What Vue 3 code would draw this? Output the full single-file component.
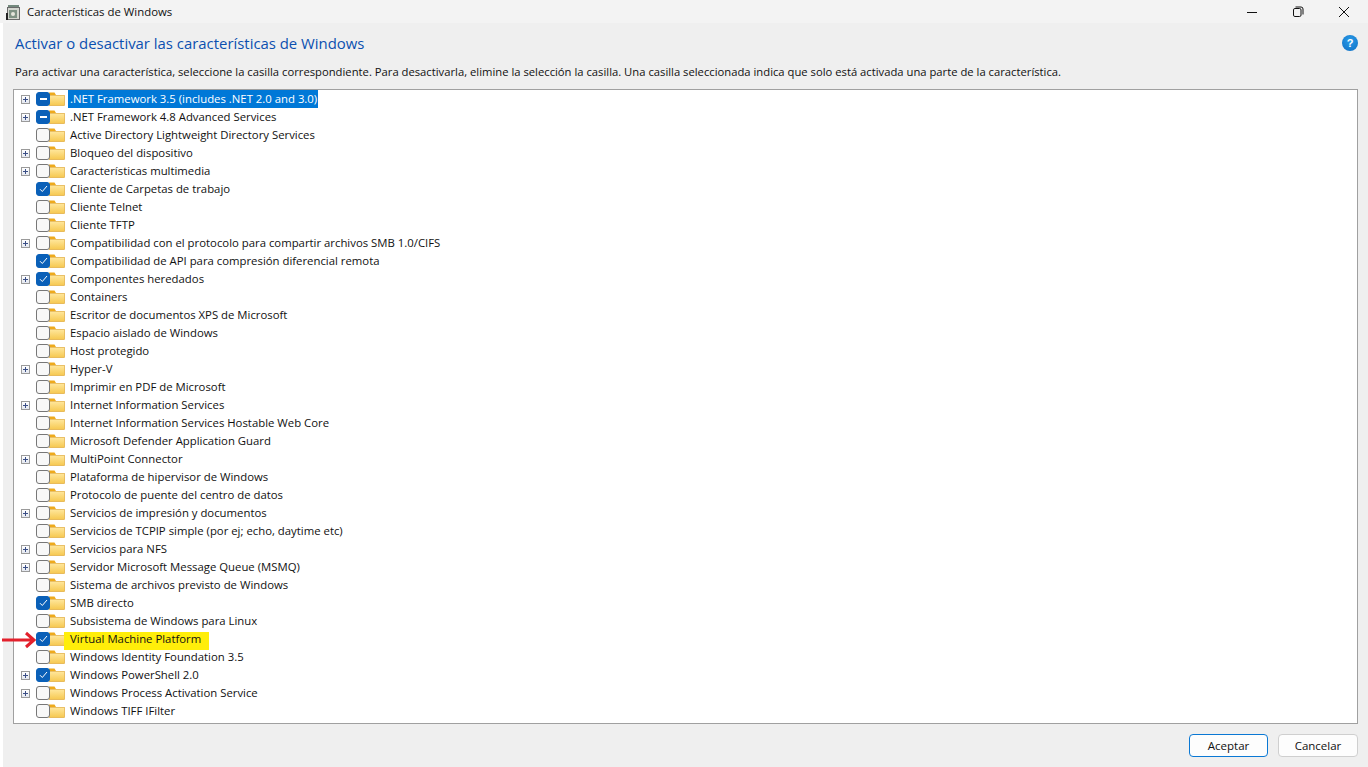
<script setup>
const rows = [
  ['.NET Framework 3.5 (includes .NET 2.0 and 3.0)', 1, 'p', 'sel'],
  ['.NET Framework 4.8 Advanced Services', 1, 'p'],
  ['Active Directory Lightweight Directory Services', 0, ''],
  ['Bloqueo del dispositivo', 1, ''],
  ['Características multimedia', 1, ''],
  ['Cliente de Carpetas de trabajo', 0, 'c'],
  ['Cliente Telnet', 0, ''],
  ['Cliente TFTP', 0, ''],
  ['Compatibilidad con el protocolo para compartir archivos SMB 1.0/CIFS', 1, ''],
  ['Compatibilidad de API para compresión diferencial remota', 0, 'c'],
  ['Componentes heredados', 1, 'c'],
  ['Containers', 0, ''],
  ['Escritor de documentos XPS de Microsoft', 0, ''],
  ['Espacio aislado de Windows', 0, ''],
  ['Host protegido', 0, ''],
  ['Hyper-V', 1, ''],
  ['Imprimir en PDF de Microsoft', 0, ''],
  ['Internet Information Services', 1, ''],
  ['Internet Information Services Hostable Web Core', 0, ''],
  ['Microsoft Defender Application Guard', 0, ''],
  ['MultiPoint Connector', 1, ''],
  ['Plataforma de hipervisor de Windows', 0, ''],
  ['Protocolo de puente del centro de datos', 0, ''],
  ['Servicios de impresión y documentos', 1, ''],
  ['Servicios de TCPIP simple (por ej; echo, daytime etc)', 0, ''],
  ['Servicios para NFS', 1, ''],
  ['Servidor Microsoft Message Queue (MSMQ)', 1, ''],
  ['Sistema de archivos previsto de Windows', 0, ''],
  ['SMB directo', 0, 'c'],
  ['Subsistema de Windows para Linux', 0, ''],
  ['Virtual Machine Platform', 0, 'c', 'mark'],
  ['Windows Identity Foundation 3.5', 0, ''],
  ['Windows PowerShell 2.0', 1, 'c'],
  ['Windows Process Activation Service', 1, ''],
  ['Windows TIFF IFilter', 0, ''],
].map(([label, expand, state, tone]) => ({ label, expand, state, tone }))
</script>

<template>
  <div class="page">
    <header class="titlebar">
      <svg class="appicon" width="16" height="16" viewBox="0 0 16 16">
        <rect x="3" y="1" width="11" height="3" fill="#74897d" />
        <rect x="2.500" y="3.500" width="12" height="12" fill="#d4d6cf" stroke="#6a6a6a" />
        <rect x="4" y="6" width="8" height="8" fill="#7f9284" />
        <circle cx="8" cy="10" r="2" fill="#e6e6dc" />
        <rect x="1" y="9" width="2" height="7" fill="#222" />
      </svg>
      <span class="title">Características de Windows</span>
      <div class="winbtns">
        <svg width="12" height="12" viewBox="0 0 12 12"><path d="M1 6.500h10" stroke="#111" fill="none" /></svg>
        <svg width="12" height="12" viewBox="0 0 12 12"><rect x="1.500" y="2.500" width="7.500" height="8" rx="1.400" stroke="#111" fill="none" /><path d="M3.500 1h5.500a2 2 0 0 1 2 2v5.500" stroke="#111" fill="none" /></svg>
        <svg width="12" height="12" viewBox="0 0 12 12"><path d="M1 1l10 10M11 1L1 11" stroke="#111" fill="none" /></svg>
      </div>
    </header>
    <main class="body">
      <div class="heading">
        <h1>Activar o desactivar las características de Windows</h1>
        <span class="help">?</span>
      </div>
      <p class="intro">Para activar una característica, seleccione la casilla correspondiente. Para desactivarla, elimine la selección la casilla. Una casilla seleccionada indica que solo está activada una parte de la característica.</p>
      <div class="list">
        <div v-for="r in rows" :key="r.label" class="row">
          <span class="exp" :class="{ off: !r.expand }"></span>
          <span class="check" :class="r.state">
            <svg v-if="r.state === 'c'" width="9" height="8" viewBox="0 0 9 8"><path d="M1 4.200l2.300 2.300L8 1" stroke="#fff" fill="none" /></svg>
            <i v-if="r.state === 'p'"></i>
          </span>
          <svg class="folder" width="17" height="14" viewBox="0 0 17 14">
            <defs>
              <linearGradient id="fold" x1="0" y1="0" x2="0" y2="1">
                <stop offset="0" stop-color="#ffe79c" />
                <stop offset="1" stop-color="#f6c850" />
              </linearGradient>
            </defs>
            <path d="M1 0.500h5.500L8 3H1z" fill="#eeaa1c" />
            <rect x="1" y="3.500" width="15.500" height="10" fill="url(#fold)" stroke="#e0aa3c" stroke-width=".7" />
          </svg>
          <span class="label" :class="r.tone">{{ r.label }}</span>
        </div>
        <svg class="arrow" width="36" height="20" viewBox="0 0 36 20"><path d="M1 10h31M25 3l8 7-8 7" stroke="#e3202c" stroke-width="3" fill="none" /></svg>
      </div>
      <footer class="actions">
        <button class="primary">Aceptar</button>
        <button class="second">Cancelar</button>
      </footer>
    </main>
  </div>
</template>

<style>
html, body { margin: 0; background: #fff; }
</style>

<style scoped>
.page { width: 1368px; height: 767px; display: flex; flex-direction: column; font-family: "Open Sans", "Noto Sans", sans-serif; color: #111; overflow: hidden; }
.titlebar { height: 23px; flex: none; background: #f3f3f3; display: flex; align-items: center; padding-left: 5px; }
.appicon { flex: none; }
.title { margin-left: 6px; font-size: 11.4px; }
.winbtns { margin-left: auto; display: flex; gap: 34px; padding-right: 18px; align-items: center; }
.body { flex: 1; margin-left: 3px; background: #efefef; display: flex; flex-direction: column; padding: 0 10px; }
.heading { display: flex; justify-content: space-between; align-items: center; height: 43px; flex: none; }
h1 { margin: -3px 0 0 2px; font-size: 14.9px; font-weight: 400; color: #0b4fb0; }
.help { width: 16px; height: 16px; border-radius: 50%; background: radial-gradient(circle at 50% 35%, #2a9be8, #0f6fc4); color: #fff; font: 700 11px/16px "Liberation Sans", sans-serif; text-align: center; margin: -3px 0 0 0; }
.intro { margin: -2px 0 0 2px; height: 25px; font-size: 11.25px; line-height: 15px; white-space: nowrap; flex: none; }
.list { position: relative; background: #fff; border: 1px solid #a0a0a0; height: 635px; flex: none; box-sizing: border-box; }
.row { height: 18px; display: flex; align-items: center; }
.exp { width: 9px; height: 9px; margin-left: 7px; margin-right: 6px; box-sizing: border-box; border: 1px solid #9a9a9a; background: linear-gradient(#fff, #e4e8f0); position: relative; flex: none; margin-top: 1px; }
.exp::before { content: ""; position: absolute; left: 1px; right: 1px; top: 3px; height: 1px; background: #3b4f86; }
.exp::after { content: ""; position: absolute; top: 1px; bottom: 1px; left: 3px; width: 1px; background: #3b4f86; }
.exp.off { visibility: hidden; }
.check { position: relative; z-index: 1; width: 14px; height: 14px; box-sizing: border-box; border: 1px solid #777; border-radius: 3px; background: #f8f8f8; display: flex; align-items: center; justify-content: center; flex: none; }
.check.c, .check.p { background: #0a60b8; border-color: #0a60b8; }
.check i { width: 7px; height: 1.500px; background: #fff; display: block; }
.folder { flex: none; margin-left: -2px; }
.label { margin-left: 4px; padding: 0 1px; font-size: 11.35px; line-height: 18px; white-space: nowrap; }
.label.sel { background: #0078d7; color: #fff; margin-left: 3px; padding: 0 1px 0 2px; }
.label.mark { background: #ffee0a; margin: 4px 0 0 -1px; padding: 0 8px 4px 6px; line-height: 14px; }
.arrow { position: absolute; left: -13px; top: 540px; }
.actions { display: flex; justify-content: flex-end; gap: 10px; padding-top: 10px; }
button { width: 79px; height: 23px; box-sizing: border-box; font: 11.5px "Open Sans", sans-serif; color: #111; border: 1px solid #cfcfcf; border-radius: 4px; background: #fdfdfd; padding: 0; }
button.primary { border-color: #0a78d4; }
button.second { width: 80px; }
</style>
